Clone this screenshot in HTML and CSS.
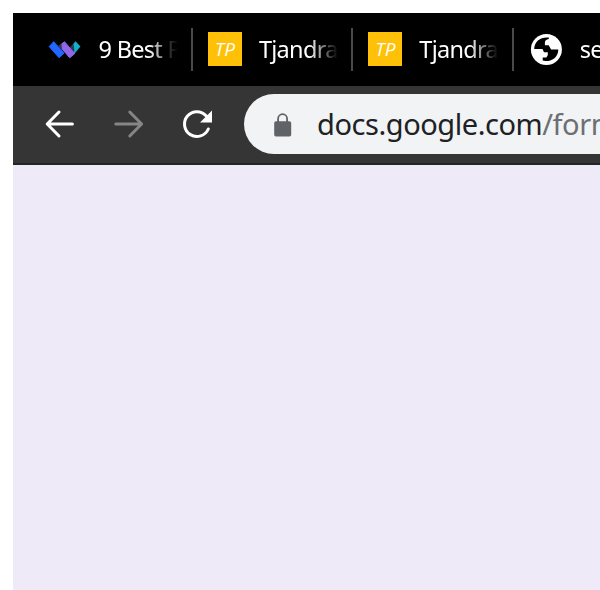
FILE: index.html
```html
<!DOCTYPE html>
<html lang="en">
<head>
<meta charset="utf-8">
<title>Browser window</title>
<link rel="stylesheet" href="styles.css">
</head>
<body>
<main class="window">
  <div class="tabs">
    <div class="tab">
      <svg class="favicon" viewBox="0 0 34 34">
        <path fill="#10b1cf" d="M27.5 9.2 32.4 14.6l-6.2 7.4-4.6-5.5z"/>
        <path fill="#303b50" d="m10 14 5-4 5 5-3 6zM21 16l4.500-4 1 7-2 3z"/>
        <path fill="#2066ff" stroke="#2066ff" stroke-linejoin="round" d="M5.700 9.700 16 21.200 11 25.700 1.200 14.600z"/>
        <path fill="#9066ed" stroke="#9066ed" stroke-linejoin="round" d="m16.500 9.700 10.200 11.900-5 4.200L14.300 17l-.3-5z"/>
      </svg>
      <span class="title">9 Best <span class="faint">P</span></span>
    </div>
    <div class="tab"><span class="favicon tp"><i>TP</i></span><span class="title">Tjandra</span></div>
    <div class="tab"><span class="favicon tp"><i>TP</i></span><span class="title">Tjandra</span></div>
    <div class="tab last">
      <svg class="favicon" viewBox="0 0 34 34">
        <circle cx="17.4" cy="17.5" r="15.500" fill="#fff"/>
        <path fill="#000" d="M5.200 17C5.400 9.800 11 5.400 18.500 5.600h1.300v1.400c-2.700.5-3.800 1.400-3.900 3.600v2.600h3.800l2.400 4.200h7.200c-.1 7-5.500 12-13 11.700l-2.600-.5v-3h3.700l1.400-2.500v-2.800h-3.800l-1.500-3.300z"/>
      </svg>
      <span class="title">se</span>
    </div>
  </div>
  <div class="toolbar">
    <svg class="nav" viewBox="0 0 34 34"><path d="M29.400 17H5M16 5 4.200 17 16 29"/></svg>
    <svg class="nav disabled" viewBox="0 0 34 34"><path d="M3.800 17H29M17.800 5l11.800 12-11.800 12"/></svg>
    <svg class="nav" viewBox="0 0 34 34"><path d="M28.300 22A12.400 12.400 0 1 1 26.300 9"/><path class="head" d="M32 3.500v12H20z"/></svg>
    <div class="address">
      <svg class="lock" viewBox="0 0 18 24"><path fill="none" stroke="#5f6368" stroke-width="1.800" d="M4.100 10V5.700a4.500 4.500 0 0 1 9 0V10"/><rect x=".2" y="8.200" width="17" height="15.300" rx="1.800" fill="#5f6368"/></svg>
      <span class="url">docs.google.com<span class="path">/forms</span></span>
    </div>
  </div>
  <div class="page"></div>
</main>
</body>
</html>
```
FILE: styles.css
```css
* { box-sizing: border-box; }
body { margin: 0; background: #fff; font-family: "Noto Sans", "Open Sans", sans-serif; }
.window {
  height: 590px;
  padding: 13px 0 0 13px;
  overflow: hidden;
  display: flex;
  flex-direction: column;
}
.tabs {
  flex: none;
  height: 73px;
  padding-left: 19.5px;
  background: #000;
  display: flex;
  align-items: center;
  overflow: hidden;
}
.tab {
  flex: none;
  width: 160.4px;
  height: 43px;
  padding: 0 0 1px 15px;
  border-right: 2px solid #4a4a4a;
  display: flex;
  align-items: center;
  gap: 17px;
}
.tab.last { border-right: 0; }
.favicon { flex: none; width: 34px; height: 34px; }
.tp {
  background: #ffc107;
  color: #fff;
  display: flex;
  align-items: center;
  justify-content: center;
  font-family: "Open Sans", sans-serif;
  font-size: 19px;
  line-height: 34px;
}
.title {
  flex: none;
  width: 80px;
  white-space: nowrap;
  color: #fff;
  font-size: 23.5px;
  line-height: 34px;
  letter-spacing: -0.7px;
  -webkit-mask-image: linear-gradient(90deg, #000 50px, transparent 79px);
  mask-image: linear-gradient(90deg, #000 50px, transparent 79px);
}
.faint { opacity: .7; }
.toolbar {
  flex: none;
  height: 79px;
  padding: 0 0 1px 30px;
  background: #353535;
  border-bottom: 2px solid #252525;
  display: flex;
  align-items: center;
  overflow: hidden;
}
.nav {
  flex: none;
  width: 34px;
  height: 34px;
  margin-right: 34.7px;
  fill: none;
  stroke: #fff;
  stroke-width: 3;
  stroke-linecap: round;
  stroke-linejoin: round;
}
.nav.disabled { stroke: #868686; }
.nav .head { fill: #fff; stroke: none; }
.address {
  flex: none;
  width: 420px;
  height: 60px;
  margin-left: -5px;
  padding-left: 30px;
  border-radius: 30px;
  background: #f1f3f4;
  display: flex;
  align-items: center;
}
.lock { flex: none; width: 18px; height: 24px; margin: 2px 25px 0 0; }
.url {
  white-space: nowrap;
  color: #202124;
  font-size: 29px;
  line-height: 40px;
  letter-spacing: -0.45px;
}
.path { color: #6c6f73; }
.page { flex: 1; background: #eeeaf8; }
```
